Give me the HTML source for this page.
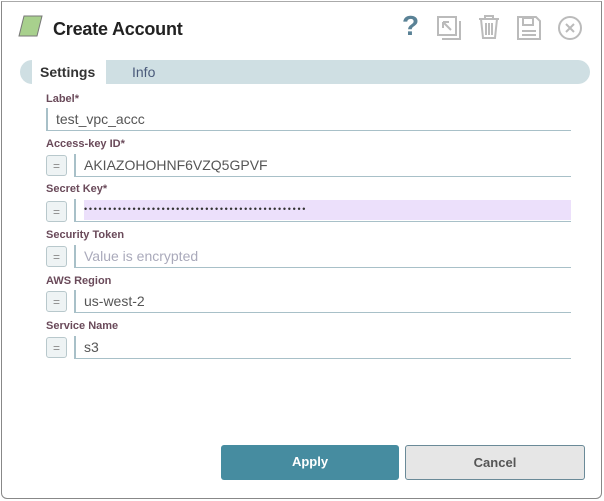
<!DOCTYPE html><html><head><style>
body{margin:0;width:604px;height:501px;background:#fff;font-family:"Liberation Sans",sans-serif;position:relative;overflow:hidden}
.win{position:absolute;left:1px;top:1px;width:599px;height:496px;border:1px solid #888;border-radius:0 0 6px 6px;border-top-color:#aaa}
.t{position:absolute}
.lab{position:absolute;left:46px;font-size:11px;font-weight:bold;color:#6a4a5a}
.inp{position:absolute;left:46px;right:33px;height:23px;border-left:2px solid #a8c0c8;border-bottom:1px solid #a8c0c8;font-size:14px;color:#555;padding-left:8px;line-height:22px;box-sizing:border-box}
.eq{position:absolute;left:46px;width:21px;height:21px;border:1px solid #b8c8cc;border-radius:3px;background:#eef3f4;color:#888;font-size:12px;text-align:center;line-height:20px;box-sizing:border-box}
.inp2{left:74px}
.btn{position:absolute;top:445px;height:35px;border-radius:3px;font-size:13px;font-weight:bold;text-align:center;line-height:34px;box-sizing:border-box}
</style></head><body>
<div class="win"></div>
<svg class="t" style="left:18px;top:14px" width="26" height="24"><polygon points="6,2 24,2 19,22 1,22" fill="#a8d08d" stroke="#777" stroke-width="1"/></svg>
<div class="t" style="left:53px;top:19px;font-size:18px;font-weight:bold;color:#222;letter-spacing:-0.2px">Create Account</div>
<div class="t" style="left:402px;top:10px;font-size:28px;font-weight:bold;color:#5a8296">?</div>
<svg class="t" style="left:436px;top:15px" width="26" height="26" fill="none" stroke="#bbb" stroke-width="2"><rect x="2" y="2" width="18" height="18"/><path d="M6 24h18V6M7 7l8 8M7 7h6M7 7v6"/></svg>
<svg class="t" style="left:477px;top:14px" width="24" height="26" fill="none" stroke="#bbb" stroke-width="2"><path d="M2 5h20M8 5V2h8v3M4 5l2 19h12l2-19M9 9v12M12 9v12M15 9v12"/></svg>
<svg class="t" style="left:516px;top:15px" width="26" height="26" fill="none" stroke="#bbb" stroke-width="2"><path d="M2 2h18l4 4v18H2z"/><rect x="7" y="3" width="10" height="7"/><path d="M6 16h14M6 20h14"/></svg>
<svg class="t" style="left:557px;top:15px" width="26" height="26" fill="none" stroke="#bbb" stroke-width="2"><circle cx="13" cy="13" r="11"/><path d="M9 9l8 8M17 9l-8 8"/></svg>
<div class="t" style="left:20px;top:60px;width:570px;height:24px;background:#cfdfe3;border-radius:12px"></div>
<div class="t" style="left:32px;top:60px;width:74px;height:24px;background:#fff"></div>
<div class="t" style="left:40px;top:64px;font-size:14px;font-weight:bold;color:#333">Settings</div>
<div class="t" style="left:132px;top:64px;font-size:14px;color:#4a5a7a">Info</div>

<div class="lab" style="top:93px">Label*</div>
<div class="inp" style="top:108px">test_vpc_accc</div>
<div class="lab" style="top:138px">Access-key ID*</div>
<div class="eq" style="top:155px">=</div><div class="inp inp2" style="top:154px">AKIAZOHOHNF6VZQ5GPVF</div>
<div class="lab" style="top:183px">Secret Key*</div>
<div class="eq" style="top:201px">=</div><div class="inp inp2" style="top:199px"><div style="position:absolute;left:8px;right:0;top:1px;height:20px;background:#ece0fb;font-size:9px;line-height:18px;color:#333;letter-spacing:1.7px;overflow:hidden;white-space:nowrap">••••••••••••••••••••••••••••••••••••••••••••••</div></div>
<div class="lab" style="top:229px">Security Token</div>
<div class="eq" style="top:246px">=</div><div class="inp inp2" style="top:245px;color:#aab">Value is encrypted</div>
<div class="lab" style="top:275px">AWS Region</div>
<div class="eq" style="top:291px">=</div><div class="inp inp2" style="top:290px">us-west-2</div>
<div class="lab" style="top:320px">Service Name</div>
<div class="eq" style="top:337px">=</div><div class="inp inp2" style="top:336px">s3</div>

<div class="btn" style="left:221px;width:178px;background:#468ca0;color:#fff">Apply</div>
<div class="btn" style="left:405px;width:180px;background:#e6e6e6;border:1px solid #6a8a98;color:#555">Cancel</div>
</body></html>
